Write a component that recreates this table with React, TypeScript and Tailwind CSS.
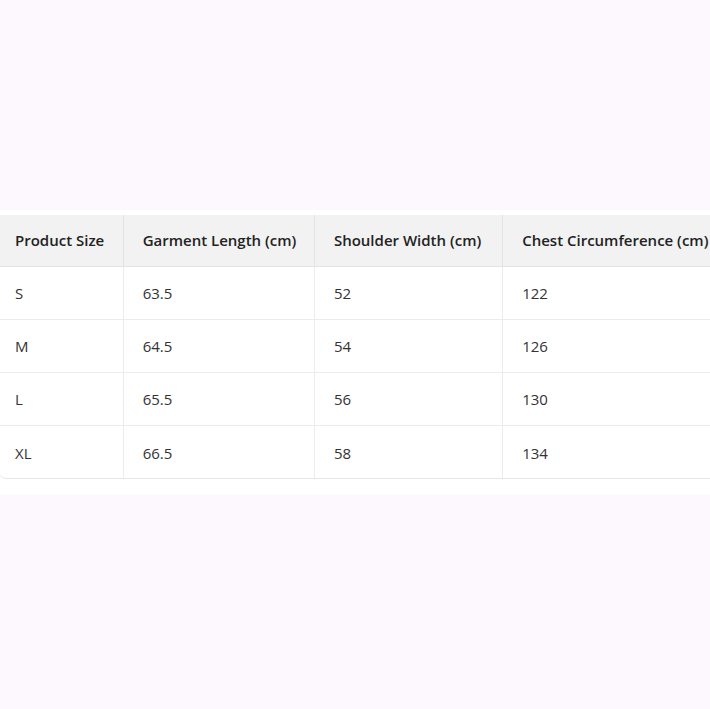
const rows = [
  ["S", "63.5", "52", "122"],
  ["M", "64.5", "54", "126"],
  ["L", "65.5", "56", "130"],
  ["XL", "66.5", "58", "134"],
];

const headers = [
  "Product Size",
  "Garment Length (cm)",
  "Shoulder Width (cm)",
  "Chest Circumference (cm)",
];

const widths = ["w-[124px]", "w-[191px]", "w-[188px]", "w-[220px]"];

export default function App() {
  return (
    <main className="min-h-[709px] w-[710px] overflow-hidden bg-[#fdf8fd] pt-[210px] font-['Open_Sans',sans-serif]">
      <div className="bg-white pt-[5px] pb-[16px]">
        <div className="-ml-px w-[724px] overflow-hidden rounded-b-lg border-b border-[#e6e6e6]">
          <table className="w-full table-fixed border-collapse text-left">
            <thead>
              <tr className="h-[51px] bg-[#f2f2f2]">
                {headers.map((h, i) => (
                  <th
                    key={h}
                    className={`${widths[i]} ${i === 0 ? "pl-[16px]" : "pl-[19px] border-l border-[#e3e3e3]"} border-b border-[#e3e3e3] text-[15px] font-semibold text-[#222] whitespace-nowrap`}
                  >
                    {h}
                  </th>
                ))}
              </tr>
            </thead>
            <tbody>
              {rows.map((r, ri) => (
                <tr key={r[0]} className={`h-[53px] ${ri < rows.length - 1 ? "border-b border-[#ececec]" : ""}`}>
                  {r.map((c, i) => (
                    <td
                      key={i}
                      className={`${i === 0 ? "pl-[16px]" : "pl-[19px] border-l border-[#ececec]"} pt-[2px] text-[15px] text-[#333]`}
                    >
                      {c}
                    </td>
                  ))}
                </tr>
              ))}
            </tbody>
          </table>
        </div>
      </div>
    </main>
  );
}
